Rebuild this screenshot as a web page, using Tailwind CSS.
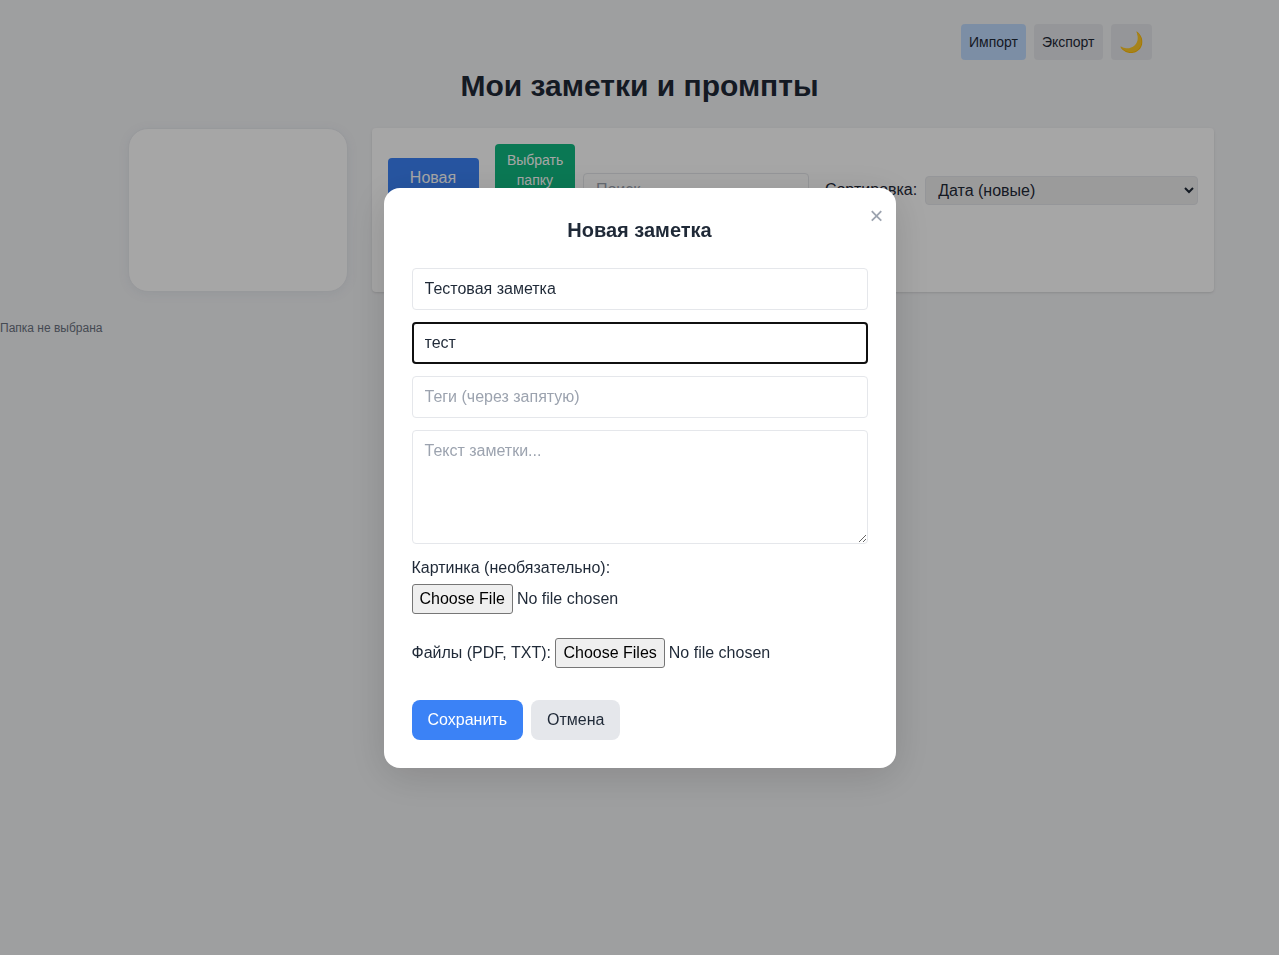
<!DOCTYPE html>
<html lang="ru">
<head>
<meta charset="utf-8">
<title>Мои заметки и промпты</title>
<script src="https://cdn.jsdelivr.net/npm/@tailwindcss/browser@4"></script>
</head>
<body class="h-screen overflow-hidden bg-[#f3f4f6] font-['Liberation_Sans',Arial,sans-serif] text-base text-[#1f2937]">
  <div class="mx-auto w-[1024px] pt-6">
    <header class="flex justify-end gap-2">
      <button class="h-9 rounded bg-[#bfdbfe] px-2 text-sm">Импорт</button>
      <button class="h-9 rounded bg-[#e5e7eb] px-2 text-sm">Экспорт</button>
      <button class="h-9 rounded bg-[#e5e7eb] px-2 text-xl">🌙</button>
    </header>
    <h1 class="mt-2 text-center text-3xl/9 font-bold">Мои заметки и промпты</h1>
  </div>
  <div class="mt-6 ml-[127.5px] flex h-[164px] gap-6">
    <aside class="w-[220px] shrink-0 rounded-[20px] border border-[#e9ebef] bg-white shadow-[0_2px_12px_rgba(80,100,140,0.08)]"></aside>
    <main class="w-[842px] shrink-0 rounded bg-white p-4 shadow">
      <div class="flex h-[92px] items-center">
        <button class="h-16 w-[91px] shrink-0 rounded bg-[#3b82f6] px-4 text-white">Новая заметка</button>
        <button class="ml-[16.4px] h-[92px] w-20 shrink-0 rounded bg-[#10b981] px-3 py-1.5 text-sm text-white">Выбрать папку для заметок</button>
        <input class="ml-2 h-[34px] w-[226px] shrink-0 rounded border border-[#e5e7eb] px-3 placeholder:text-[#9ca3af]" placeholder="Поиск...">
        <label class="ml-4">Сортировка:</label>
        <select class="ml-2 mt-px h-[29px] w-[273px] shrink-0 rounded border border-[#e5e7eb] bg-[#efefef] px-2">
          <option>Дата (новые)</option>
        </select>
      </div>
    </main>
  </div>
  <p class="mt-7 text-xs text-[#6b7280]">Папка не выбрана</p>

  <div class="fixed inset-0 flex items-start justify-center bg-black/35 pt-[188px]">
    <form class="relative h-[580px] w-[512px] rounded-2xl bg-white p-7 shadow-[0_8px_40px_rgba(0,0,0,0.14)]">
      <button type="button" class="absolute top-3 right-3 text-2xl/8 text-[#9ca3af]">×</button>
      <h2 class="mb-6 text-center text-xl/7 font-bold">Новая заметка</h2>
      <div class="flex flex-col gap-3">
        <input class="h-[42px] rounded border border-[#e5e7eb] px-3" value="Тестовая заметка">
        <input class="h-[42px] rounded border-2 border-[#101010] px-[11px]" value="тест">
        <input class="h-[42px] rounded border border-[#e5e7eb] px-3 placeholder:text-[#9ca3af]" placeholder="Теги (через запятую)">
        <textarea class="h-[114px] rounded border border-[#e5e7eb] px-3 py-2 placeholder:text-[#9ca3af]" placeholder="Текст заметки..."></textarea>
      </div>
      <label class="mt-3 block">Картинка (необязательно):</label>
      <input type="file" class="mt-1 block h-[30px] w-full file:rounded-[3px] file:border file:border-solid file:border-[#767676] file:bg-[#efefef] file:px-[7px] file:py-0.5 file:text-black">
      <div class="mt-6 flex h-[30px] items-center gap-[4.5px]">
        <label>Файлы (PDF, TXT):</label>
        <input type="file" multiple class="h-[30px] file:rounded-[3px] file:border file:border-solid file:border-[#767676] file:bg-[#efefef] file:px-[7px] file:py-0.5 file:text-black">
      </div>
      <div class="mt-8 flex gap-2">
        <button type="button" class="h-10 rounded-lg bg-[#3b82f6] px-4 text-white">Сохранить</button>
        <button type="button" class="h-10 rounded-lg bg-[#e5e7eb] px-4">Отмена</button>
      </div>
    </form>
  </div>
</body>
</html>
